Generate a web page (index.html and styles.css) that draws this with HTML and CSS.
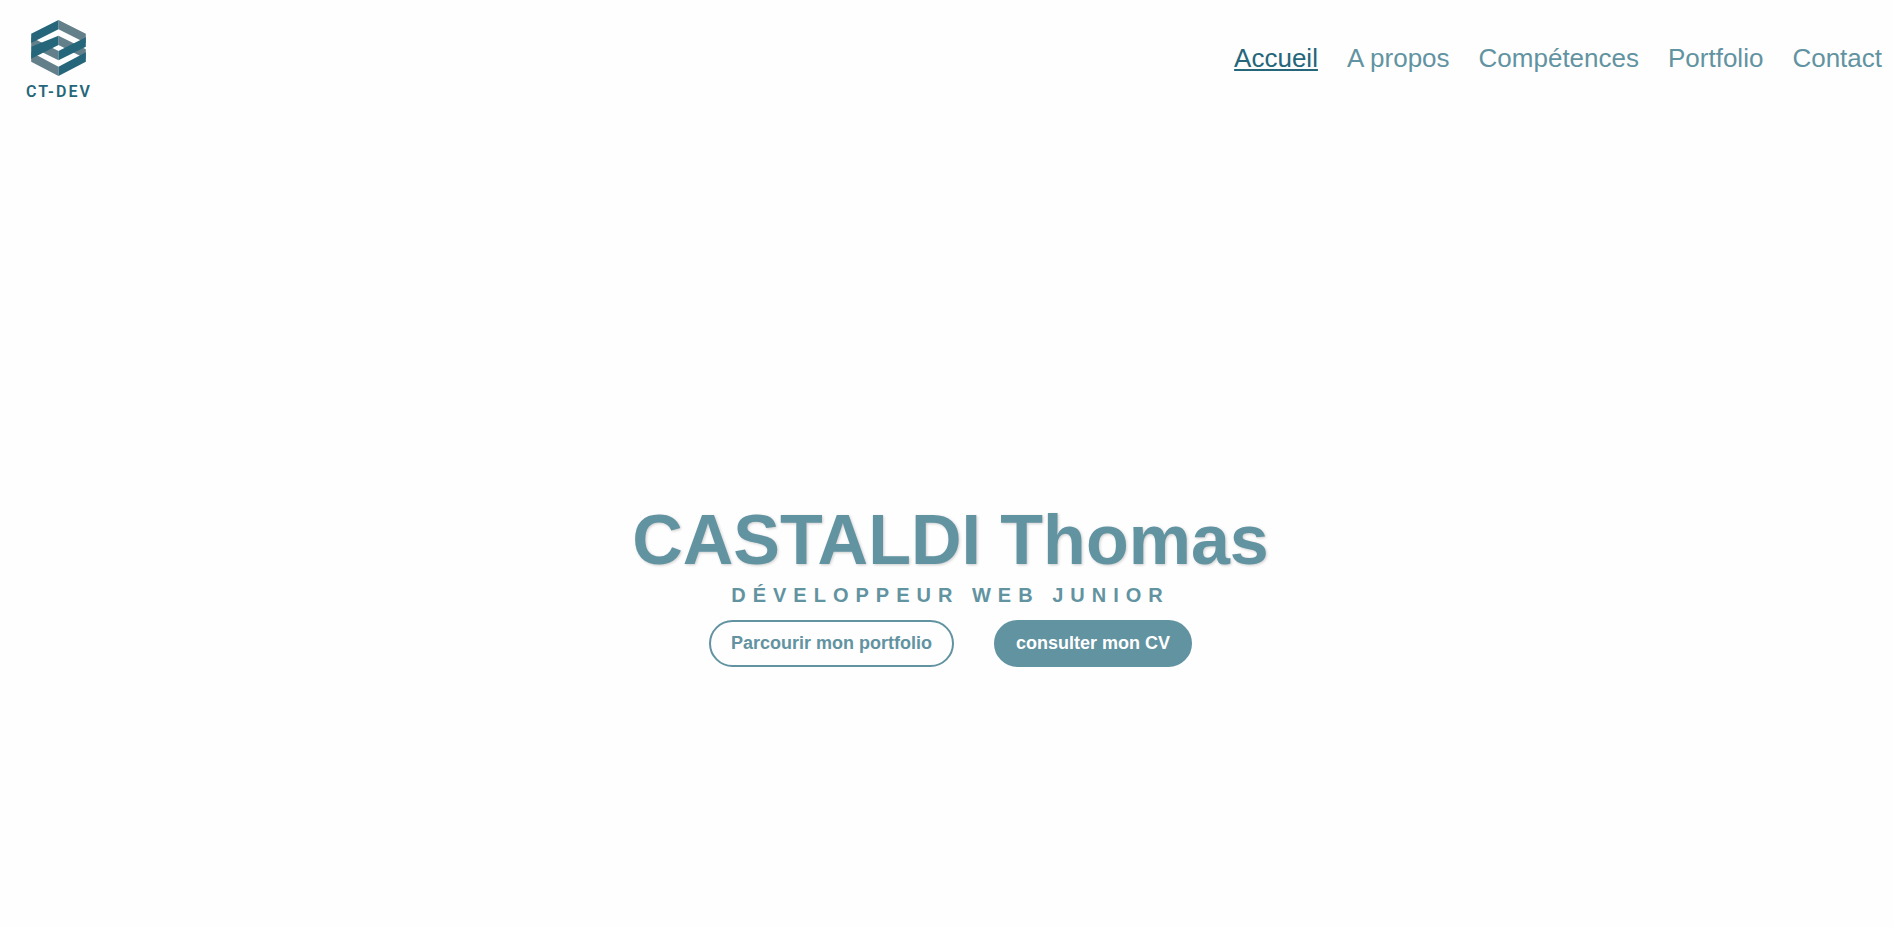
FILE: index.html
```html
<!DOCTYPE html>
<html lang="fr">
<head>
<meta charset="utf-8">
<meta name="viewport" content="width=device-width, initial-scale=1">
<title>CASTALDI Thomas</title>
<link rel="stylesheet" href="styles.css">
</head>
<body>
<header class="header">
  <a class="brand" href="#" aria-label="CT-DEV">
    <svg class="brand-mark" viewBox="0 0 164 168" aria-hidden="true">
      <path class="grey" d="M82 0L164 41V69L82 28Z"/>
      <path class="grey" d="M0 52L82 93V121L0 80Z"/>
      <path class="dark" d="M0 41L82 0V28L0 69Z"/>
      <path class="grey" d="M82 47L164 88V116L82 75Z"/>
      <path class="grey" d="M0 97L82 140V168L0 125Z"/>
      <path class="dark" d="M164 97L82 140V168L164 125Z"/>
      <path class="dark" d="M0 80L82 47V75L0 116Z"/>
      <path class="dark" d="M164 52L82 93V121L164 80Z"/>
    </svg>
    <span class="brand-name">CT-DEV</span>
  </a>
  <nav class="nav">
    <a class="nav-link active" href="#">Accueil</a>
    <a class="nav-link" href="#apropos">A propos</a>
    <a class="nav-link" href="#competences">Compétences</a>
    <a class="nav-link" href="#portfolio">Portfolio</a>
    <a class="nav-link" href="#contact">Contact</a>
  </nav>
</header>
<main class="hero">
  <h1 class="title">CASTALDI Thomas</h1>
  <h2 class="subtitle">DÉVELOPPEUR WEB JUNIOR</h2>
  <div class="actions">
    <a class="button" href="#portfolio">Parcourir mon portfolio</a>
    <a class="button filled" href="#cv">consulter mon CV</a>
  </div>
</main>
</body>
</html>
```
FILE: styles.css
```css
* { box-sizing: border-box; }
body {
  margin: 0;
  background: #fefefe;
  color: #6293a1;
  font-family: Arial, "Liberation Sans", sans-serif;
}
.header {
  display: flex;
  align-items: center;
  justify-content: space-between;
  height: 116px;
  padding: 0 11px 0 26px;
}
.brand {
  display: flex;
  flex-direction: column;
  align-items: center;
  gap: 8px;
  padding-top: 3px;
  color: #25667a;
  text-decoration: none;
}
.brand-mark { width: 55px; height: 56px; }
.dark { fill: #25667a; }
.grey { fill: #627f8a; }
.brand-name {
  font: 600 16px/16px Roboto, sans-serif;
  letter-spacing: 2px;
}
.nav { display: flex; gap: 29px; }
.nav-link {
  color: #6293a1;
  font-size: 26px;
  text-decoration: none;
}
.active { color: #25667a; text-decoration: underline; }
.hero {
  display: flex;
  flex-direction: column;
  align-items: center;
  padding: 384px 0 40px 8px;
}
.title {
  margin: 0;
  font-size: 70px;
  line-height: 80px;
  text-shadow: 1px 1px 3px rgba(0, 0, 0, 0.2);
}
.subtitle {
  margin: 0 0 10px;
  font-size: 20px;
  line-height: 30px;
  letter-spacing: 7px;
}
.actions { display: flex; gap: 40px; }
.button {
  padding: 11px 20px;
  border: 2px solid #6293a1;
  border-radius: 24px;
  color: #6293a1;
  font-size: 18px;
  font-weight: 700;
  line-height: 21px;
  text-decoration: none;
}
.filled { background: #6293a1; color: #fff; }
```
